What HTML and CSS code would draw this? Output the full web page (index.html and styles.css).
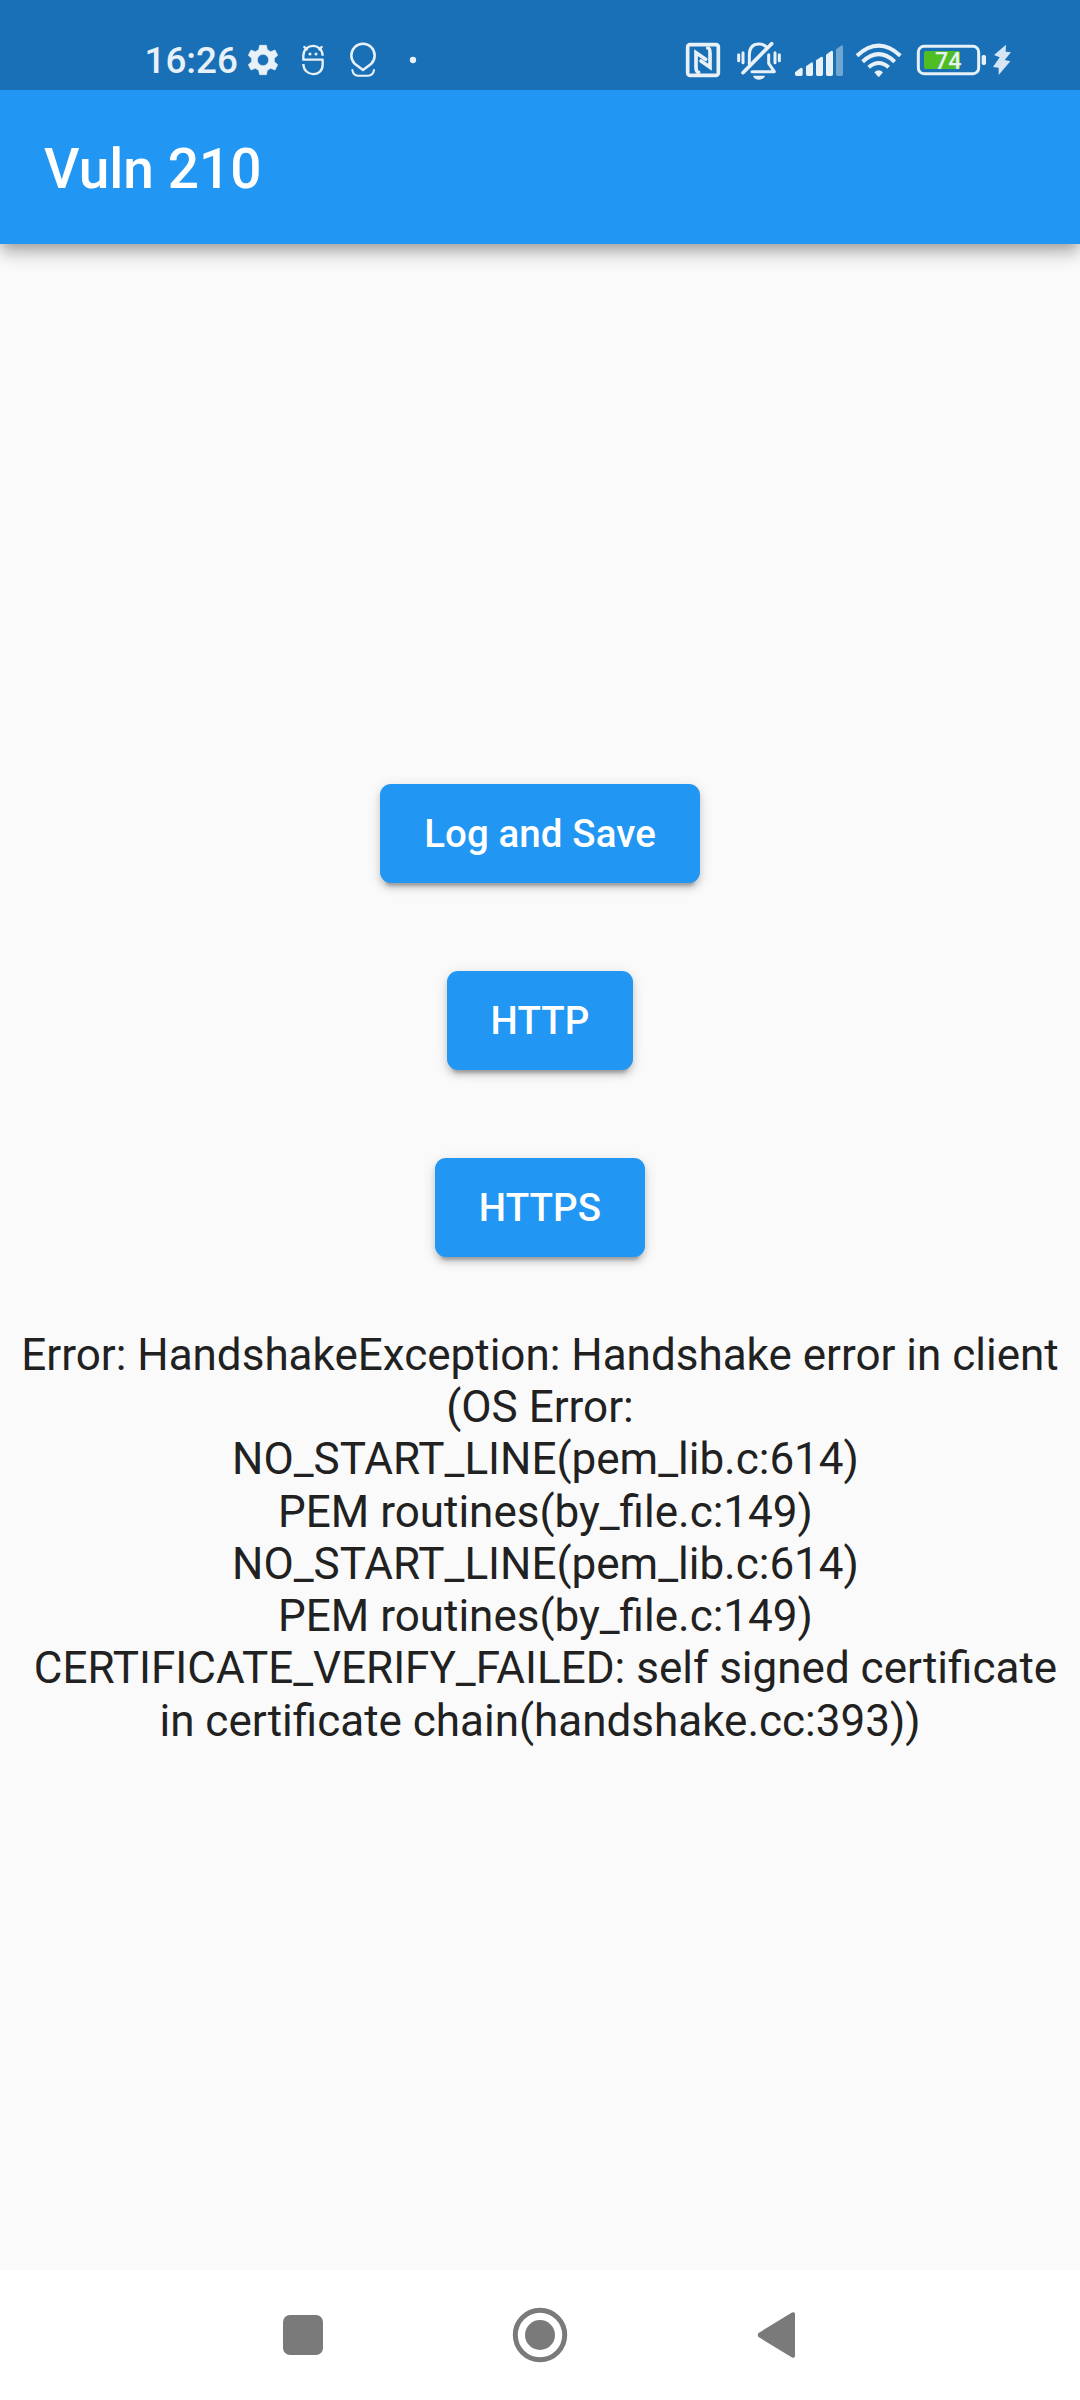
FILE: index.html
```html
<!DOCTYPE html>
<html lang="en">
<head>
<meta charset="utf-8">
<title>Vuln 210</title>
<link rel="stylesheet" href="styles.css">
</head>
<body>
<div class="screen">
  <div class="status-bar">
    <div class="status-group">
      <span class="clock">16:26</span>
      <svg class="icon gear" viewBox="348 60 102 120"><path fill-rule="evenodd" stroke="#e8f0f8" stroke-width="2" stroke-linejoin="round" d="M389 76h20l3 13 10 6 13-5 8 16-10 9v10l10 9-8 16-13-5-10 6-3 13h-20l-3-13-10-6-13 5-8-16 10-9v-10l-10-9 8-16 13 5 10-6zM399 103a17 17 0 1 0 .1 0z"/></svg>
      <svg class="icon bug" viewBox="510 60 78 120"><g class="line" stroke-width="7"><path class="flat" d="M578 107C577 68 521 68 520 107V119H578V134C578 172 521 172 520 132"/><path d="M523 81l7 7M575 81l-7 7"/></g><circle cx="540" cy="102" r="4.500"/><circle cx="558" cy="102" r="4.500"/></svg>
      <svg class="icon pin" viewBox="654 60 90 120"><g class="line" stroke-width="7.500"><path d="M699 150L674 131A35 35 0 1 1 724 131Z"/><path d="M667 150C669 163 677 167 684 167H714C722 167 730 163 732 150" stroke-width="6"/></g></svg>
      <svg class="icon dot" viewBox="834 60 30 120"><circle cx="849" cy="120" r="9.500"/></svg>
    </div>
    <div class="status-group">
      <svg class="icon nfc" viewBox="42 60 114 120"><g class="line"><rect x="53" y="74" width="92" height="92" rx="7" stroke-width="11"/><path d="M86 157C78 157 78 150 78 142V98L107 118M113 84C120 84 120 92 120 100V142L93 123" stroke-width="11" stroke-linejoin="miter"/></g></svg>
      <svg class="icon bell" viewBox="195 60 144 120"><g class="line" stroke-width="9"><path d="M238 132V106C238 80 252 72 267 72C276 72 284 75 290 82M296 104V130L313 155H246"/><path d="M219 158L305 71" stroke-width="11"/><path d="M206 104V122M219 98V128M315 98V128M328 104V122"/></g><path d="M249 167H285C281 183 253 183 249 167Z"/></svg>
      <svg class="icon signal" viewBox="369 60 153 120"><path d="M375 157L392 144Q398 141 398 148V163Q398 168 393 168H380Q375 168 375 163ZM408 139L423 128Q429 125 429 132V163Q429 168 424 168H413Q408 168 408 163ZM438 121L453 111Q459 108 459 115V163Q459 168 454 168H443Q438 168 438 163ZM468 104L483 93Q489 90 489 97V163Q489 168 484 168H473Q468 168 468 163Z"/><path opacity=".42" d="M498 88L513 77Q519 74 519 81V163Q519 168 514 168H503Q498 168 498 163Z"/></svg>
      <svg class="icon wifi" viewBox="12 60 150 120"><g fill="none" stroke="#e8f0f8" stroke-width="12"><path d="M21 107Q86 47 151 107"/><path d="M38 125Q86 80 134 125"/><path d="M56 142Q86 116 116 142"/></g><path d="M73 157Q86 144 99 157L89 169Q86 172 83 169Z"/></svg>
      <svg class="icon battery" viewBox="198 60 213 120"><rect class="line" x="205" y="79" width="181" height="82" rx="17" stroke-width="9"/><rect class="charge" x="222" y="93" width="108" height="54" rx="5"/><rect x="395" y="105" width="13" height="30" rx="5"/><text class="percent" x="255" y="147">74</text></svg>
      <svg class="icon bolt" viewBox="426 60 60 120"><path d="M468 74L432 105 449 112 429 141 446 143V165L481 124 464 120 483 97 467 95Z"/></svg>
    </div>
  </div>
  <header class="app-bar"><h1 class="title">Vuln 210</h1></header>
  <main class="content">
    <div class="tap-target"><button class="button">Log and Save</button></div>
    <div class="tap-target"><button class="button">HTTP</button></div>
    <div class="tap-target"><button class="button">HTTPS</button></div>
    <p class="message">Error: HandshakeException: Handshake error in client (OS Error:
 NO_START_LINE(pem_lib.c:614)
 PEM routines(by_file.c:149)
 NO_START_LINE(pem_lib.c:614)
 PEM routines(by_file.c:149)
 CERTIFICATE_VERIFY_FAILED: self signed certificate in certificate chain(handshake.cc:393))</p>
  </main>
  <nav class="nav-bar">
    <svg class="nav-icon" viewBox="0 0 60 60"><rect x="10" y="10" width="40" height="40" rx="7"/></svg>
    <svg class="nav-icon" viewBox="0 0 60 60"><circle class="ring" cx="30" cy="30" r="24.700"/><circle cx="30" cy="30" r="15"/></svg>
    <svg class="nav-icon" viewBox="0 0 60 60"><path d="M11.500 28L45 7.500Q48 6.500 48 9V51Q48 53.500 45 52.500L11.500 32Q10 30 11.500 28Z"/></svg>
  </nav>
</div>
</body>
</html>
```
FILE: styles.css
```css
body {
  margin: 0;
  font-family: Roboto, "Liberation Sans", sans-serif;
}

.screen {
  display: flex;
  flex-direction: column;
  width: 1080px;
  height: 2400px;
  background: #fafafa;
}

.status-bar {
  box-sizing: border-box;
  position: relative;
  z-index: 1;
  display: flex;
  justify-content: space-between;
  height: 90px;
  padding: 40px 68px 0 144.500px;
  background: #1a70b7;
  color: #e8f0f8;
}

.status-group {
  display: flex;
}

.clock {
  width: 101.500px;
  font-size: 36.800px;
  font-weight: 500;
  line-height: 42px;
}

.icon {
  display: block;
  height: 40px;
  fill: #e8f0f8;
}

.line {
  fill: none;
  stroke: #e8f0f8;
  stroke-linecap: round;
  stroke-linejoin: round;
}

.flat {
  stroke-linecap: butt;
}

.gear { width: 34px; }
.bug { width: 26px; margin-left: 20px; }
.pin { width: 30px; margin-left: 22px; }
.dot { width: 10px; margin-left: 30px; }
.nfc { width: 38px; }
.bell { width: 48px; margin-left: 13px; }
.signal { width: 51px; margin-left: 10px; }
.wifi { width: 50px; margin-left: 10px; }
.battery { width: 71px; margin-left: 12px; }
.bolt { width: 20px; margin-left: 5px; fill: #d5e5f3; }

.charge {
  fill: #4fbe22;
}

.percent {
  font-size: 70px;
  font-weight: 500;
}

.app-bar {
  box-sizing: border-box;
  display: flex;
  align-items: center;
  height: 154px;
  padding: 3px 0 0 44px;
  background: #2196f3;
  box-shadow: 0 5.500px 11px -2.750px rgba(0, 0, 0, .2), 0 11px 14px rgba(0, 0, 0, .14), 0 3px 27px rgba(0, 0, 0, .12);
  color: #fff;
}

.title {
  margin: 0;
  font-size: 55px;
  font-weight: 500;
}

.content {
  flex: 1;
  display: flex;
  flex-direction: column;
  align-items: center;
  justify-content: center;
  gap: 55px;
}

.tap-target {
  display: flex;
  align-items: center;
  height: 132px;
}

.button {
  height: 99px;
  padding: 0 44px;
  border: 0;
  border-radius: 11px;
  background: #2196f3;
  box-shadow: 0 8px 3px -5px rgba(0, 0, 0, .2), 0 5px 6px rgba(0, 0, 0, .14), 0 3px 14px rgba(0, 0, 0, .12);
  color: #fff;
  font-family: inherit;
  font-size: 38.500px;
  font-weight: 500;
  letter-spacing: .08px;
}

.message {
  margin: 0 0 -.25px;
  padding-top: .25px;
  color: #212121;
  font-size: 44px;
  line-height: 52.250px;
  text-align: center;
  white-space: pre-wrap;
}

.nav-bar {
  display: flex;
  justify-content: space-between;
  align-items: center;
  height: 130px;
  padding: 0 273px;
  background: #fff;
}

.nav-icon {
  width: 60px;
  height: 60px;
  fill: #7a7a7a;
}

.ring {
  fill: none;
  stroke: #7a7a7a;
  stroke-width: 5;
}
```
